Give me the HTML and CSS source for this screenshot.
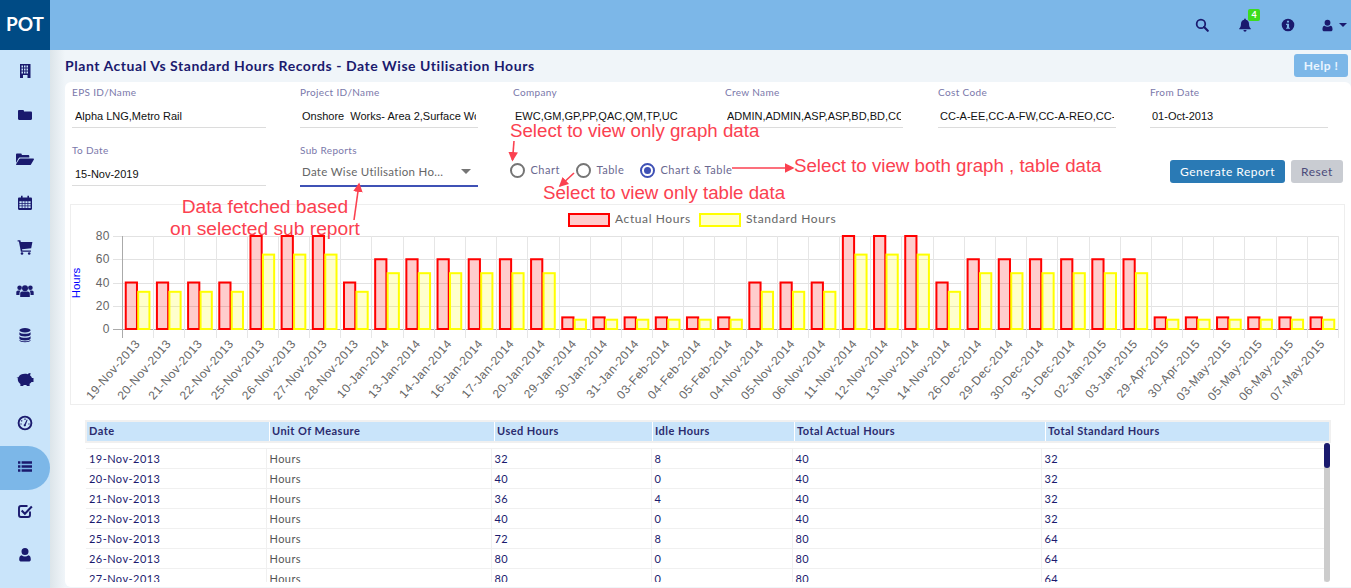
FILE: index.html
```html
<!DOCTYPE html>
<html lang="en">
<head>
    <meta charset="UTF-8">
    <meta name="viewport" content="width=device-width, initial-scale=1.0">
    <title>Plant Actual Vs Standard Hours Records</title>
    <link rel="stylesheet" href="styles.css">
</head>
<body>
    <header class="topbar">
        <div class="logo">POT</div>
        <div class="top-icons">
            <div class="top-item">
                <svg class="icon" viewBox="0 0 16 16"><circle cx="6.8" cy="6.8" r="4.9" fill="none" stroke="currentColor" stroke-width="2"/><path d="M10.4 10.4l4.2 4.2" stroke="currentColor" stroke-width="2.4" stroke-linecap="round"/></svg>
            </div>
            <div class="top-item">
                <svg class="icon" viewBox="0 0 16 16"><path d="M8 0.6a1 1 0 0 1 1 1v.5c2.4.5 3.6 2.4 3.6 4.7 0 2.800.8 3.900 2 5.200v.9H1.400V12c1.200-1.300 2-2.400 2-5.200C3.400 4.500 4.600 2.600 7 2.100v-.5a1 1 0 0 1 1-1zM6.200 13.800h3.600a1.800 1.800 0 0 1-3.600 0z" fill="currentColor"/></svg>
                <span class="badge">4</span>
            </div>
            <div class="top-item">
                <svg class="icon" viewBox="0 0 16 16"><path fill-rule="evenodd" d="M8 .8a7.200 7.200 0 1 1 0 14.400A7.200 7.200 0 0 1 8 .8zM6.800 3v2.200h2.400V3zM5.800 6.600v1.400h1v3H5.800v1.400h4.400V11h-1V6.600z" fill="currentColor"/></svg>
            </div>
            <div class="top-item top-user">
                <svg class="icon" viewBox="0 0 16 16"><path d="M8 1a3.600 3.600 0 1 1 0 7.200A3.600 3.600 0 0 1 8 1zM4.400 8.400C5.400 9.200 6.600 9.600 8 9.600s2.600-.4 3.600-1.200c1.800.2 2.600 2 2.600 4.400 0 1.400-.9 2.200-2.200 2.200H4c-1.300 0-2.200-.8-2.200-2.200 0-2.400.8-4.200 2.600-4.400z" fill="currentColor"/></svg>
                <span class="caret"></span>
            </div>
        </div>
    </header>

    <div class="layout">
        <nav class="sidebar">
            <a class="nav-item"><svg class="icon" viewBox="0 0 16 16"><path fill-rule="evenodd" d="M3 1h10.500v14H3zM4.500 2.500v2h1.500v-2zm2.500 0v2h1.500v-2zm2.500 0v2H11v-2zm-5 3v2h1.500v-2zm2.500 0v2h1.500v-2zm2.500 0v2H11v-2zm-5 3v2h1.500v-2zm2.500 0v2h1.500v-2zm2.500 0v2H11v-2zM6 12v3h4.500v-3z" fill="currentColor"/></svg></a>
            <a class="nav-item"><svg class="icon" viewBox="0 0 16 16"><path d="M1 4.200C1 3.500 1.500 3 2.200 3h3.600c.7 0 1.200.5 1.200 1.200V4.600h6.800c.7 0 1.200.5 1.200 1.200v6c0 .7-.5 1.200-1.200 1.200H2.200C1.500 13 1 12.500 1 11.800z" fill="currentColor"/></svg></a>
            <a class="nav-item"><svg class="icon icon-wide" viewBox="0 0 18 16"><path d="M0 12V3.600C0 3 .5 2.500 1.100 2.500h3.600c.6 0 1.100.5 1.100 1.100v.3h6.400c.6 0 1.100.5 1.100 1.100V6.500H4.200C3.300 6.500 2.700 7 2.300 7.700zM4.400 7.500h12.900c.6 0 .9.500.6 1l-2.900 5c-.2.400-.6.500-1 .5H.8c-.6 0-.9-.5-.6-1l3.100-4.900c.3-.4.600-.6 1.100-.6z" fill="currentColor"/></svg></a>
            <a class="nav-item"><svg class="icon" viewBox="0 0 16 16"><path fill-rule="evenodd" d="M4 .8h1.600v1.700h4.800V.8H12v1.700h1.800c.7 0 1.200.5 1.200 1.200v10.100c0 .7-.5 1.200-1.200 1.200H2.200c-.7 0-1.200-.5-1.200-1.200V3.700c0-.7.500-1.200 1.200-1.200H4zM2.400 6.200v1.700h2.300V6.200zm3.100 0v1.700h2.100V6.200zm2.900 0v1.700h2.100V6.200zm2.900 0v1.700h2.300V6.200zM2.400 8.700v1.700h2.300V8.700zm3.100 0v1.700h2.100V8.700zm2.900 0v1.700h2.100V8.700zm2.900 0v1.700h2.300V8.700zM2.400 11.200v1.900h2.300v-1.900zm3.100 0v1.900h2.100v-1.900zm2.900 0v1.900h2.100v-1.900zm2.900 0v1.900h2.300v-1.900z" fill="currentColor"/></svg></a>
            <a class="nav-item"><svg class="icon" viewBox="0 0 16 16"><path d="M.6 1.200h2.700l.5 1.800h11.600l-1.200 6.200-9.200 1.100.3 1.100h8.600v1.400H3.900L1.900 2.600H.6z" fill="currentColor"/><circle cx="5" cy="14.500" r="1.300" fill="currentColor"/><circle cx="12.200" cy="14.500" r="1.300" fill="currentColor"/></svg></a>
            <a class="nav-item"><svg class="icon icon-wide" viewBox="0 0 18 16"><circle cx="3.600" cy="4.800" r="2.300" fill="currentColor"/><circle cx="14.400" cy="4.800" r="2.300" fill="currentColor"/><circle cx="9" cy="5.200" r="3" fill="currentColor"/><path d="M.3 12V9.300c0-1 .8-1.800 1.800-1.800h2.400c-.6.800-1 1.800-1 3V12zM17.700 12V9.300c0-1-.8-1.800-1.800-1.800h-2.400c.6.800 1 1.800 1 3V12zM6.200 8.500h5.600c1.200 0 2 .9 2 2V14H4.200v-3.500c0-1.100.8-2 2-2z" fill="currentColor"/></svg></a>
            <a class="nav-item"><svg class="icon" viewBox="0 0 16 16"><ellipse cx="8" cy="3.200" rx="5.600" ry="2.200" fill="currentColor"/><path d="M2.400 5.200C3.400 6.300 5.500 6.800 8 6.800s4.600-.5 5.600-1.600v2.200C13.600 8.600 11.100 9.400 8 9.400S2.400 8.600 2.400 7.400zM2.400 9.200c1 1.100 3.100 1.600 5.600 1.600s4.600-.5 5.600-1.600v2.200c0 1.200-2.500 2-5.600 2s-5.600-.8-5.600-2zM2.400 12.800c1 1 3.100 1.500 5.600 1.500s4.600-.5 5.600-1.500v.4c0 1.200-2.500 2-5.600 2s-5.600-.8-5.600-2z" fill="currentColor"/></svg></a>
            <a class="nav-item"><svg class="icon icon-wide" viewBox="0 0 18 16"><path d="M.6 6.500c.9.100 1.500-.1 2-.6C3.600 4 6 2.800 9 2.800c1 0 1.800.1 2.600.4.700-.7 1.700-1.100 3-1.100l-.5 2.500c.9.700 1.500 1.400 1.900 2.300H17.500v4h-2c-.5.800-1.100 1.400-1.900 1.900V15h-3v-1.100H7.400V15h-3v-2.100c-1.500-1-2.600-2.600-2.600-4.400 0-.4 0-.8.100-1.200-.6 0-1.100-.3-1.300-.8z" fill="currentColor"/></svg></a>
            <a class="nav-item"><svg class="icon" viewBox="0 0 16 16"><circle cx="8" cy="8" r="6.400" fill="none" stroke="currentColor" stroke-width="1.900"/><path d="M7.400 9.200l2.400-4.700.8.400-1.800 4.900a1.100 1.100 0 1 1-1.400-.6z" fill="currentColor"/><path d="M8 3.600v1.300M4.200 5.500l1 .8M3.400 9h1.300M11.300 9h1.300" stroke="currentColor" stroke-width="1.100"/></svg></a>
            <a class="nav-item nav-item-active"><svg class="icon" viewBox="0 0 16 16"><path d="M1 2.300h2.400v2.500H1zM4.600 2.300H15v2.500H4.600zM1 6.300h2.400v2.500H1zM4.600 6.300H15v2.500H4.600zM1 10.300h2.400v2.500H1zM4.600 10.300H15v2.500H4.600z" fill="currentColor"/></svg></a>
            <a class="nav-item"><svg class="icon" viewBox="0 0 16 16"><path d="M13 8.600V12c0 1.100-.9 2-2 2H4c-1.100 0-2-.9-2-2V5c0-1.100.9-2 2-2h6.500" fill="none" stroke="currentColor" stroke-width="1.900"/><path d="M5.400 6.700l2.500 2.500 6.200-6.500 1.500 1.500-7.700 8-4-4z" fill="currentColor"/></svg></a>
            <a class="nav-item"><svg class="icon" viewBox="0 0 16 16"><path d="M8 1a3.500 3.500 0 1 1 0 7A3.500 3.500 0 0 1 8 1zM4.600 8.200c1 .8 2.100 1.200 3.400 1.200s2.400-.4 3.400-1.200c1.600.2 2.400 1.900 2.400 4.200 0 1.300-.9 2.100-2.100 2.100H4.300c-1.200 0-2.100-.8-2.100-2.100 0-2.300.8-4 2.400-4.200z" fill="currentColor"/></svg></a>
        </nav>

        <main class="content">
            <div class="title-row">
                <h1>Plant Actual Vs Standard Hours Records - Date Wise Utilisation Hours</h1>
                <button class="btn btn-help">Help !</button>
            </div>

            <section class="card">
                <form class="filters">
                    <div class="field field-wide">
                        <label>EPS ID/Name</label>
                        <input type="text" value="Alpha LNG,Metro Rail" readonly>
                    </div>
                    <div class="field">
                        <label>Project ID/Name</label>
                        <input type="text" value="Onshore  Works- Area 2,Surface Works- Area 1" readonly>
                    </div>
                    <div class="field field-plain">
                        <label>Company</label>
                        <input type="text" value="EWC,GM,GP,PP,QAC,QM,TP,UC" readonly>
                    </div>
                    <div class="field">
                        <label>Crew Name</label>
                        <input type="text" value="ADMIN,ADMIN,ASP,ASP,BD,BD,CC,CC,CIV" readonly>
                    </div>
                    <div class="field">
                        <label>Cost Code</label>
                        <input type="text" value="CC-A-EE,CC-A-FW,CC-A-REO,CC-A-STR" readonly>
                    </div>
                    <div class="field">
                        <label>From Date</label>
                        <input type="text" value="01-Oct-2013" readonly>
                    </div>
                    <div class="field field-wide">
                        <label>To Date</label>
                        <input type="text" value="15-Nov-2019" readonly>
                    </div>
                    <div class="field">
                        <label>Sub Reports</label>
                        <div class="select-box">
                            <span class="select-text">Date Wise Utilisation Ho...</span>
                            <span class="select-arrow"></span>
                        </div>
                    </div>
                    <div class="radio-group">
                        <div class="radio-item radio-chart"><span class="radio"></span>Chart</div>
                        <div class="radio-item radio-table"><span class="radio"></span>Table</div>
                        <div class="radio-item"><span class="radio radio-on"></span>Chart &amp; Table</div>
                    </div>
                    <div class="actions">
                        <button type="button" class="btn btn-primary">Generate Report</button>
                        <button type="button" class="btn btn-reset">Reset</button>
                    </div>
                </form>

                <div class="chart-box" id="chartBox"></div>

                <div class="table-box">
                    <table class="report-table report-head">
                        <thead>
                            <tr>
                                <th>Date</th>
                                <th>Unit Of Measure</th>
                                <th>Used Hours</th>
                                <th>Idle Hours</th>
                                <th>Total Actual Hours</th>
                                <th>Total Standard Hours</th>
                            </tr>
                        </thead>
                    </table>
                    <div class="table-scroll">
                        <table class="report-table report-body">
                            <tbody id="reportRows"></tbody>
                        </table>
                        <div class="scroll-track"><div class="scroll-thumb"></div></div>
                    </div>
                </div>
            </section>
        </main>
    </div>

    <!-- red help notes lying over the page -->
    <svg class="note-arrows" viewBox="0 0 1351 588">
        <defs>
            <marker id="arrowHead" markerWidth="6" markerHeight="6" refX="5" refY="3" orient="auto">
                <path d="M0 0L6 3L0 6z" fill="#fb4150"/>
            </marker>
        </defs>
        <path d="M514 141L512.500 160" marker-end="url(#arrowHead)"/>
        <path d="M574 173L560 186" marker-end="url(#arrowHead)"/>
        <path d="M732 168H793" marker-end="url(#arrowHead)"/>
        <path d="M354 220L359 184" marker-end="url(#arrowHead)"/>
    </svg>
    <div class="note note-graph">Select to view only graph data</div>
    <div class="note note-both">Select to view both graph , table data</div>
    <div class="note note-table">Select to view only table data</div>
    <div class="note note-fetched">Data fetched based<br>on selected sub report</div>

    <script src="script.js"></script>
</body>
</html>
```

FILE: styles.css
```css
* {
    box-sizing: border-box;
}
html, body {
    height: 100%;
}
body {
    font-family: Lato, Arial, sans-serif;
    color: #1a1a6e;
    background-color: #f0f5f9;
    margin: 0;
    overflow: hidden;
    display: flex;
    flex-direction: column;
}
.icon {
    display: block;
    width: 16px;
    height: 16px;
}
.icon-wide {
    width: 18px;
}

/* top bar */
.topbar {
    flex: none;
    height: 50px;
    display: flex;
    justify-content: space-between;
    background-color: #7cb7e8;
}
.logo {
    width: 50px;
    background-color: #004b85;
    color: #fff;
    font-size: 19px;
    font-weight: 700;
    line-height: 48px;
    text-align: center;
}
.top-icons {
    display: flex;
}
.top-item {
    position: relative;
    width: 43px;
    display: flex;
    align-items: center;
    justify-content: center;
    color: #1a1a6e;
}
.top-item .icon {
    width: 14px;
    height: 14px;
}
.top-user {
    width: 42px;
    justify-content: flex-start;
    gap: 5px;
    padding-left: 12px;
}
.top-user .icon {
    width: 13px;
    height: 13px;
}
.caret {
    width: 0;
    height: 0;
    border-left: 4px solid transparent;
    border-right: 4px solid transparent;
    border-top: 4px solid #1a1a6e;
}
.badge {
    position: absolute;
    top: 9px;
    left: 25px;
    width: 12px;
    height: 12px;
    border-radius: 2px;
    background-color: #3ddc1c;
    color: #fff;
    font-size: 9px;
    font-weight: 700;
    line-height: 11px;
    text-align: center;
}

/* side menu */
.layout {
    flex: 1;
    display: flex;
    min-height: 0;
}
.sidebar {
    flex: none;
    width: 50px;
    background-color: #c9e4fa;
    color: #1a1a6e;
}
.nav-item {
    height: 44px;
    padding-bottom: 3px;
    display: flex;
    align-items: center;
    justify-content: center;
}
.nav-item-active {
    background-color: #7cb7e8;
    border-radius: 0 22px 22px 0;
}

/* main area */
.content {
    flex: 1;
    min-width: 0;
    display: flex;
    flex-direction: column;
    padding-left: 15px;
    background: linear-gradient(to right, #dce5ea, #f0f5f9 15px);
}
.title-row {
    flex: none;
    height: 32px;
    display: flex;
    justify-content: space-between;
    padding: 4px 3px 0 0;
}
h1 {
    margin: 3px 0 0;
    font-size: 14px;
    font-weight: 700;
    letter-spacing: 0.55px;
    line-height: 18px;
    color: #1a1a6e;
}
.btn {
    font-family: Lato, Arial, sans-serif;
    border: none;
    border-radius: 3px;
    height: 23px;
    padding: 0;
    font-size: 12px;
    letter-spacing: 0.5px;
    cursor: pointer;
}
.btn-help {
    width: 54px;
    background-color: #7cb7e8;
    color: #eaf5ff;
    font-weight: 700;
}
.btn-primary {
    width: 115px;
    background-color: #2a7ab5;
    color: #fff;
}
.btn-reset {
    width: 52px;
    background-color: #c9ccd2;
    color: #4b4b7a;
}
.card {
    flex: 1;
    min-height: 0;
    background-color: #fff;
    border-radius: 6px 6px 0 6px;
    margin-bottom: 1px;
    overflow: hidden;
}

/* filters */
.filters {
    display: grid;
    grid-template-columns: 228px 213px 212px 213px 212px 193px;
    grid-auto-rows: 46px;
    row-gap: 12px;
    padding: 5px 0 0 7px;
}
.field {
    width: 178px;
}
.field-wide {
    width: 194px;
}
.field label {
    display: block;
    height: 12px;
    font-size: 10px;
    line-height: 11px;
    letter-spacing: 0.35px;
    color: #7a78aa;
}
.field input {
    display: block;
    width: 100%;
    height: 27px;
    margin-top: 2px;
    padding: 3px 2px 0;
    border: none;
    border-bottom: 1px solid #dcdcdc;
    outline: none;
    font-family: "Liberation Sans", Arial, sans-serif;
    font-size: 11px;
    color: #111;
}
.field-wide input {
    padding-left: 3px;
}
.field-plain input {
    border-bottom-color: transparent;
}
.select-box {
    height: 28px;
    margin-top: 2px;
    padding: 0 7px 2px 2px;
    display: flex;
    align-items: center;
    justify-content: space-between;
    border-bottom: 2px solid #3f51b5;
    font-size: 11.5px;
    letter-spacing: 0.3px;
    color: #666;
}
.select-text {
    white-space: nowrap;
}
.select-arrow {
    width: 0;
    height: 0;
    border-left: 5px solid transparent;
    border-right: 5px solid transparent;
    border-top: 5px solid #757575;
}
.radio-group {
    grid-column: 3 / span 3;
    display: flex;
    align-items: center;
    margin-left: -3px;
    padding-top: 2px;
    font-size: 11px;
    letter-spacing: 0.5px;
    color: #6a6890;
}
.radio-item {
    display: flex;
    align-items: center;
    gap: 5.5px;
}
.radio-chart {
    width: 66px;
}
.radio-table {
    width: 64px;
}
.radio {
    position: relative;
    width: 15px;
    height: 15px;
    margin-top: 2px;
    border: 2px solid #757575;
    border-radius: 50%;
}
.radio-on {
    border-color: #3f51b5;
}
.radio-on::after {
    content: "";
    position: absolute;
    top: 2px;
    left: 2px;
    width: 7px;
    height: 7px;
    border-radius: 50%;
    background-color: #3f51b5;
}
.actions {
    display: flex;
    justify-content: flex-end;
    align-items: flex-end;
    gap: 6px;
    padding-bottom: 8px;
}

/* chart */
.chart-box {
    height: 201px;
    margin: 13px 6px 0 5px;
    border: 1px solid #eee;
}
.chart-box svg {
    display: block;
    width: 100%;
    height: 100%;
}
.chart-tick {
    font-family: "Liberation Sans", Arial, sans-serif;
    font-size: 12px;
    letter-spacing: 0.5px;
    fill: #666;
}
.chart-legend {
    font-family: Lato, Arial, sans-serif;
    font-size: 12px;
    letter-spacing: 0.6px;
    fill: #666;
}
.chart-axis-title {
    font-family: "Liberation Sans", Arial, sans-serif;
    font-size: 11.5px;
    fill: #0000ff;
}

/* table */
.table-box {
    width: 1246px;
    margin: 15px 0 0 20px;
}
.report-table {
    table-layout: fixed;
    font-size: 11px;
    letter-spacing: 0.45px;
}
.report-head {
    width: 1246px;
    border-collapse: separate;
    border-spacing: 0;
    border: 2px solid #f0f0f0;
}
.report-head th {
    height: 19px;
    padding: 0 2px 2px;
    background-color: #c9e4fa;
    border-left: 1px solid #fff;
    color: #2b2b6e;
    font-weight: 700;
    text-align: left;
    letter-spacing: 0.45px;
}
.report-head th:first-child { width: 182px; border-left: none; }
.report-head th:nth-child(2) { width: 225px; }
.report-head th:nth-child(3) { width: 158px; }
.report-head th:nth-child(4) { width: 142px; }
.report-head th:nth-child(5) { width: 251px; }
.table-scroll {
    position: relative;
    width: 1245px;
    height: 139px;
    padding: 5px 0 0 1px;
    overflow: hidden;
}
.scroll-track {
    position: absolute;
    top: 0;
    right: 0;
    bottom: 0;
    width: 6px;
    background-color: #ccc;
    border-radius: 3px;
}
.scroll-thumb {
    height: 25px;
    background-color: #1a1a6e;
    border-radius: 3px;
}
.report-body {
    width: 1239px;
    border-collapse: collapse;
}
.report-body td {
    height: 20px;
    padding: 0 2px 1px 3px;
    border: 1px solid #f0f0f0;
    color: #1a1a6e;
    white-space: nowrap;
}
.report-body td:first-child { width: 180px; border-left: none; }
.report-body td:nth-child(2) { width: 225px; color: #555; }
.report-body td:nth-child(3) { width: 160px; }
.report-body td:nth-child(4) { width: 141px; }
.report-body td:nth-child(5) { width: 249px; }

/* red notes */
.note-arrows {
    position: absolute;
    left: 0;
    top: 0;
    width: 1351px;
    height: 588px;
    pointer-events: none;
}
.note-arrows path {
    fill: none;
    stroke: #fb4150;
    stroke-width: 1.6;
}
.note-arrows marker path {
    fill: #fb4150;
    stroke: none;
}
.note {
    position: absolute;
    font-family: "Liberation Sans", Arial, sans-serif;
    font-size: 18.7px;
    line-height: 22px;
    color: #fb4150;
    white-space: nowrap;
}
.note-graph {
    left: 510px;
    top: 120px;
}
.note-both {
    left: 794px;
    top: 155px;
}
.note-table {
    left: 543px;
    top: 182px;
}
.note-fetched {
    left: 170px;
    top: 196px;
    font-size: 19.2px;
    text-align: center;
}
```

FILE: script.js
```js
const labels = [
    '19-Nov-2013', '20-Nov-2013', '21-Nov-2013', '22-Nov-2013', '25-Nov-2013', '26-Nov-2013', '27-Nov-2013', '28-Nov-2013',
    '10-Jan-2014', '13-Jan-2014', '14-Jan-2014', '16-Jan-2014', '17-Jan-2014', '20-Jan-2014',
    '29-Jan-2014', '30-Jan-2014', '31-Jan-2014', '03-Feb-2014', '04-Feb-2014', '05-Feb-2014',
    '04-Nov-2014', '05-Nov-2014', '06-Nov-2014', '11-Nov-2014', '12-Nov-2014', '13-Nov-2014', '14-Nov-2014',
    '26-Dec-2014', '29-Dec-2014', '30-Dec-2014', '31-Dec-2014', '02-Jan-2015', '03-Jan-2015',
    '29-Apr-2015', '30-Apr-2015', '03-May-2015', '05-May-2015', '06-May-2015', '07-May-2015'
];
const actual = [
    40, 40, 40, 40, 80, 80, 80, 40,
    60, 60, 60, 60, 60, 60,
    10, 10, 10, 10, 10, 10,
    40, 40, 40, 80, 80, 80, 40,
    60, 60, 60, 60, 60, 60,
    10, 10, 10, 10, 10, 10
];
// rows that fit in the visible part of the table
const used = [32, 40, 36, 40, 72, 80, 80];

const SVG_NS = 'http://www.w3.org/2000/svg';

function el(parent, name, attrs, text) {
    const node = document.createElementNS(SVG_NS, name);
    Object.keys(attrs).forEach(key => node.setAttribute(key, attrs[key]));
    if (text) node.textContent = text;
    parent.appendChild(node);
    return node;
}

function drawChart() {
    const svg = el(document.getElementById('chartBox'), 'svg', { viewBox: '0 0 1273 199' });
    const left = 51;
    const right = 1267;
    const top = 31;
    const bottom = 124;
    const step = (right - left) / labels.length;
    const yPos = value => top + (80 - value) / 80 * (bottom - top);

    // legend
    el(svg, 'rect', { x: 498, y: 9, width: 40, height: 12, fill: 'rgba(255,0,0,0.2)', stroke: '#f00', 'stroke-width': 2 });
    el(svg, 'text', { x: 544, y: 18, class: 'chart-legend' }, 'Actual Hours');
    el(svg, 'rect', { x: 629, y: 9, width: 40, height: 12, fill: 'rgba(255,255,0,0.2)', stroke: '#ff0', 'stroke-width': 2 });
    el(svg, 'text', { x: 675, y: 18, class: 'chart-legend' }, 'Standard Hours');

    // grid
    [80, 60, 40, 20, 0].forEach(value => {
        const y = Math.round(yPos(value)) + 0.5;
        el(svg, 'line', { x1: left - 9, x2: right, y1: y, y2: y, stroke: value === 0 ? '#aaa' : '#e2e2e2' });
        el(svg, 'text', { x: left - 12, y: y + 3, 'text-anchor': 'end', class: 'chart-tick' }, String(value));
    });
    for (let i = 0; i <= labels.length; i++) {
        const x = Math.round(left + i * step) + 0.5;
        el(svg, 'line', { x1: x, x2: x, y1: top, y2: bottom + 9, stroke: i === 0 ? '#aaa' : '#e6e6e6' });
    }

    // bars
    const barWidth = step * 0.8 / 2 * 0.9;
    labels.forEach((label, i) => {
        const groupLeft = left + i * step + step * 0.1;
        const std = actual[i] * 0.8;
        const barA = groupLeft + step * 0.4 * 0.05;
        const barB = groupLeft + step * 0.4 + step * 0.4 * 0.05;
        el(svg, 'rect', {
            x: barA, y: yPos(actual[i]), width: barWidth, height: yPos(0) - yPos(actual[i]),
            fill: 'rgba(255,0,0,0.2)', stroke: '#f00', 'stroke-width': 2
        });
        el(svg, 'rect', {
            x: barB, y: yPos(std), width: barWidth, height: yPos(0) - yPos(std),
            fill: 'rgba(255,255,0,0.2)', stroke: '#ff0', 'stroke-width': 2
        });

        const tx = left + (i + 0.5) * step + 3;
        el(svg, 'text', {
            x: tx, y: bottom + 15, 'text-anchor': 'end', class: 'chart-tick',
            transform: `rotate(-49 ${tx} ${bottom + 15})`
        }, label);
    });

    el(svg, 'text', {
        x: 9, y: 78, 'text-anchor': 'middle', class: 'chart-axis-title',
        transform: 'rotate(-90 9 78)'
    }, 'Hours');
}

function fillTable() {
    const rows = document.getElementById('reportRows');
    used.forEach((usedHours, i) => {
        const total = actual[i];
        const tr = document.createElement('tr');
        [labels[i], 'Hours', usedHours, total - usedHours, total, total * 0.8].forEach(value => {
            const td = document.createElement('td');
            td.textContent = value;
            tr.appendChild(td);
        });
        rows.appendChild(tr);
    });
}

drawChart();
fillTable();
```
